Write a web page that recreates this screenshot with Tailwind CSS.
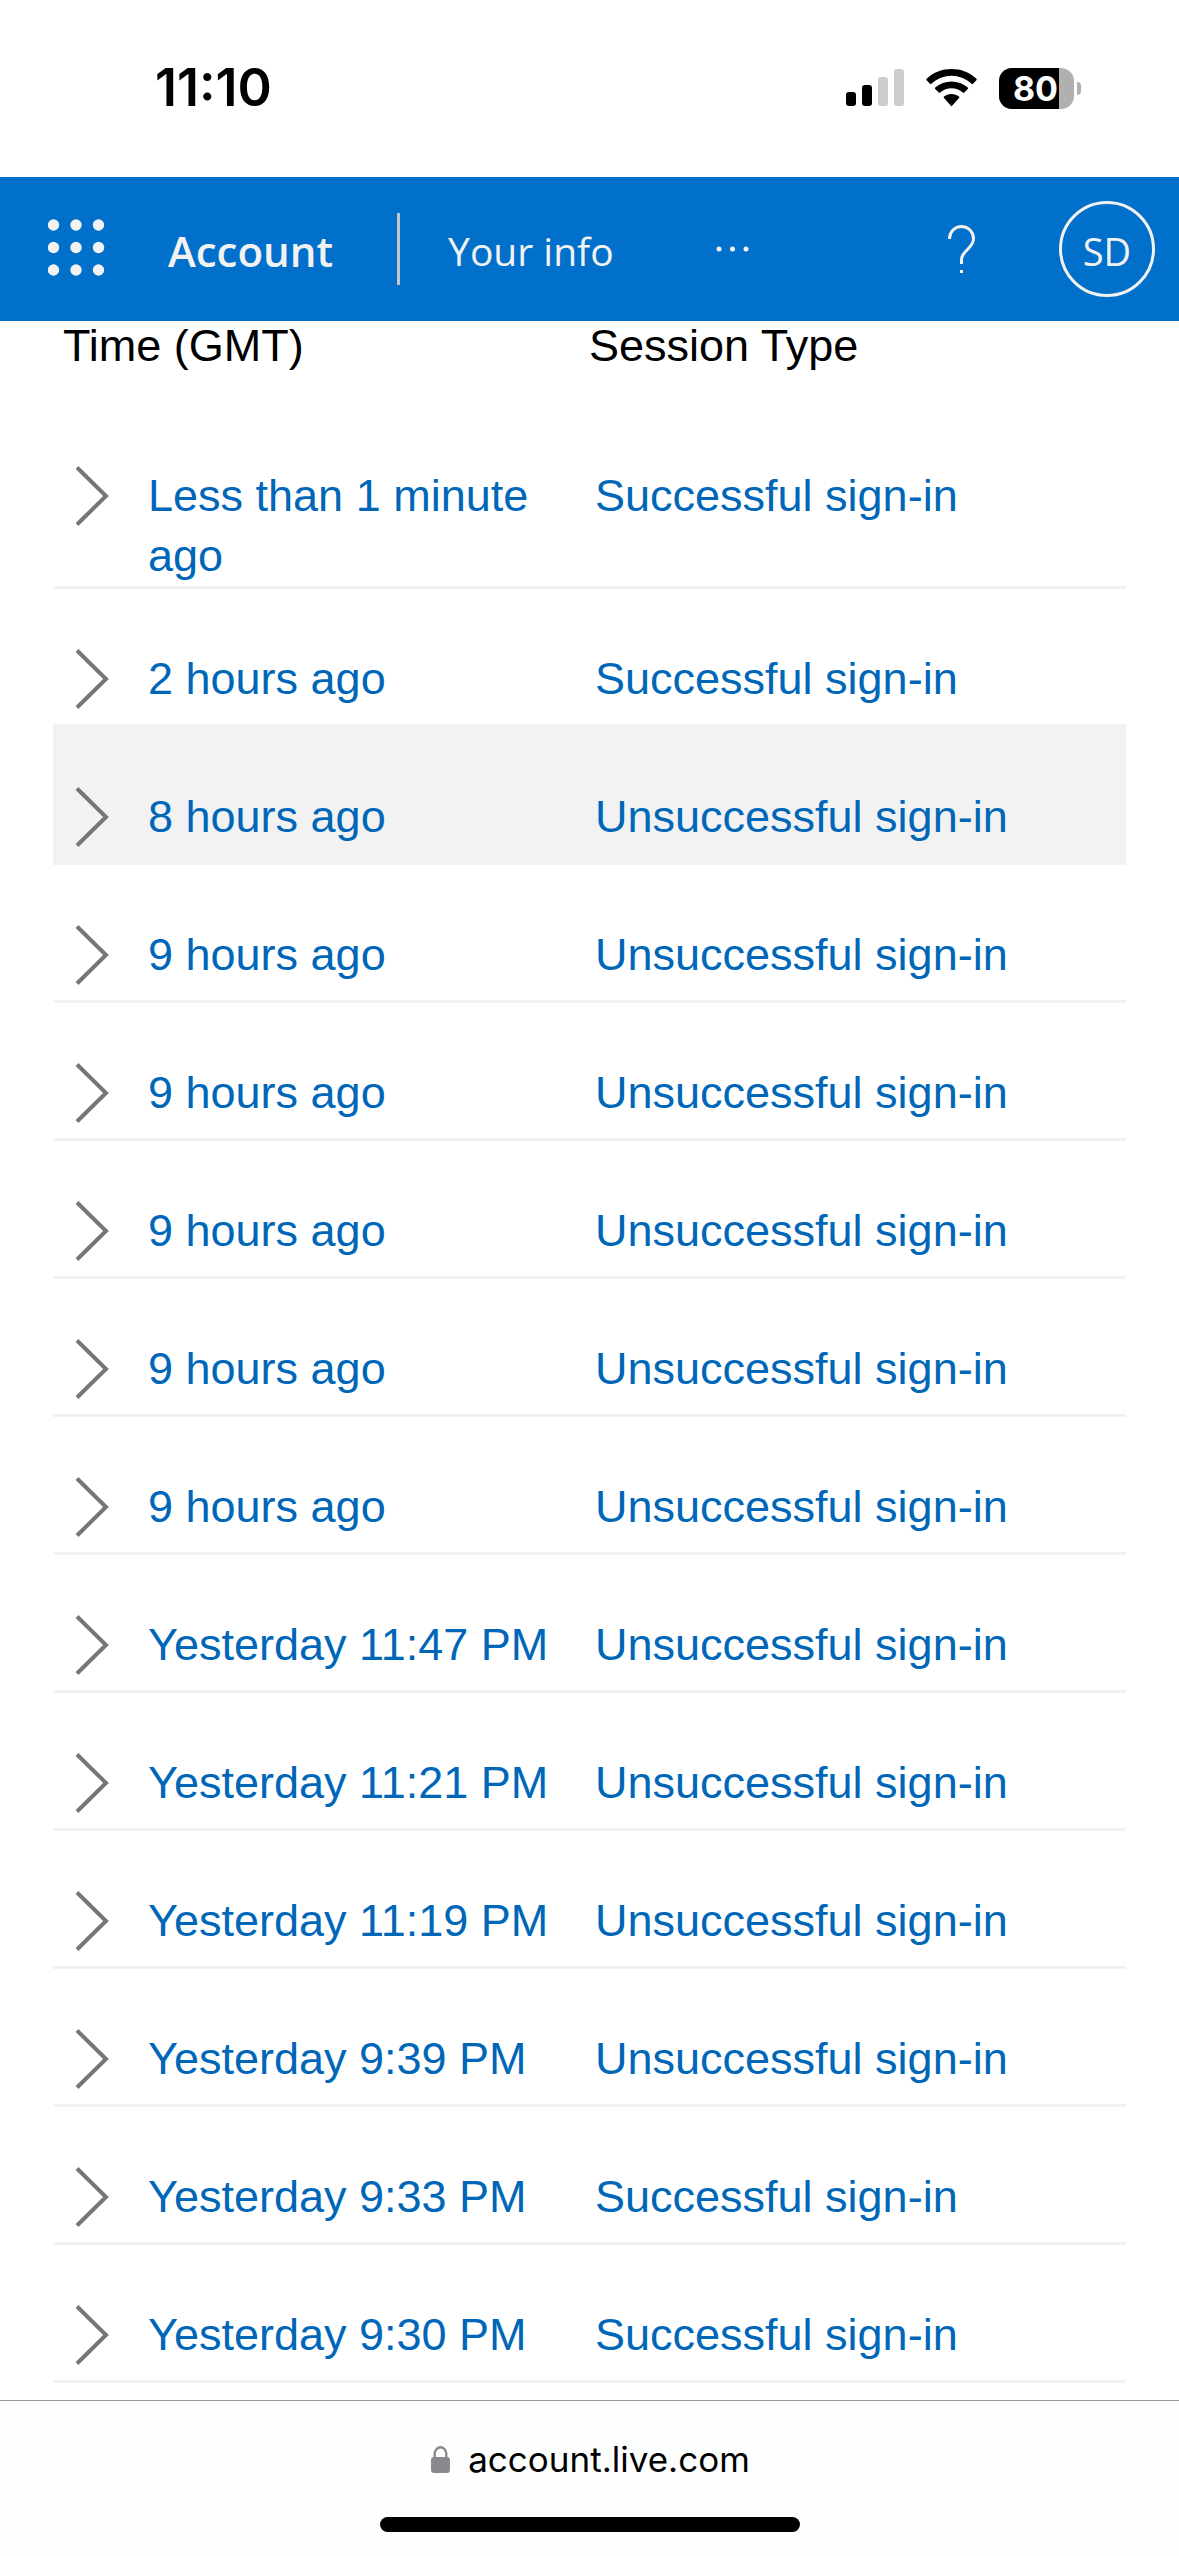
<!DOCTYPE html>
<html lang="en">
<head>
<meta charset="utf-8">
<meta name="viewport" content="width=device-width, initial-scale=1">
<title>Recent activity</title>
<script src="https://cdn.jsdelivr.net/npm/@tailwindcss/browser@4"></script>
</head>
<body class="flex min-h-screen flex-col bg-white font-['Liberation_Sans',Arial,sans-serif] text-[45px] text-black">

<!-- Status bar -->
<div class="flex h-[177px] shrink-0 items-start justify-between pt-[58px] pr-[98px] pl-[155px] font-[Inter,sans-serif]">
  <time class="text-[52px] leading-[60px] font-semibold">11:10</time>
  <div class="flex h-[60px] items-center gap-[22px]">
    <svg class="h-[38px] w-[58px]" viewBox="0 0 58 38" aria-label="Signal">
      <rect x="0" y="23" width="10" height="14" rx="3"/>
      <rect x="16" y="16" width="10" height="21" rx="3"/>
      <rect x="32" y="8" width="10" height="29" rx="3" fill="#ccc"/>
      <rect x="48" y="0" width="10" height="37" rx="3" fill="#ccc"/>
    </svg>
    <svg class="h-[38px] w-[51px]" viewBox="0 0 51 38" aria-label="Wi-Fi">
      <path d="M0.6 11.2a1 1 0 0 1 0-1.4C14-3.2 37-3.2 50.4 9.800a1 1 0 0 1 0 1.400l-3.400 3.600a1 1 0 0 1-1.400 0C34 4 17 4 5.400 14.800a1 1 0 0 1-1.400 0z"/>
      <path d="M9.200 20a1 1 0 0 1 0-1.400C18 10.600 33 10.600 41.800 18.600a1 1 0 0 1 0 1.400l-3.500 3.600a1 1 0 0 1-1.400 0C30.500 17.900 20.500 17.900 14.100 23.600a1 1 0 0 1-1.400 0z"/>
      <path d="M18 29a1 1 0 0 1 0-1.500C22.300 24.100 28.700 24.100 33 27.500a1 1 0 0 1 0 1.500l-6.700 7.600a1 1 0 0 1-1.600 0z"/>
    </svg>
    <div class="flex items-center gap-[3px]">
      <div class="flex h-[41px] w-[75px] items-center overflow-hidden rounded-[13px] bg-[#b0b0b0]">
        <span class="flex h-full w-[60px] items-center justify-end bg-black pr-px text-[34px] leading-[41px] font-bold text-white">80</span>
      </div>
      <div class="h-[13px] w-[4px] rounded-r-full bg-[#b0b0b0]"></div>
    </div>
  </div>
</div>

<!-- Site header -->
<header class="flex h-36 shrink-0 items-center bg-[#0070cb] pr-6 pl-12 font-['Open_Sans','Noto_Sans',sans-serif] text-[#f2f2f2]">
  <button type="button" aria-label="App launcher" class="mb-1 shrink-0">
    <svg class="size-[57px]" viewBox="0 0 57 57" fill="#f2f2f2">
      <circle cx="5.500" cy="6" r="5.700"/><circle cx="28" cy="6" r="5.700"/><circle cx="50.500" cy="6" r="5.700"/>
      <circle cx="5.500" cy="28.500" r="5.700"/><circle cx="28" cy="28.500" r="5.700"/><circle cx="50.500" cy="28.500" r="5.700"/>
      <circle cx="5.500" cy="51" r="5.700"/><circle cx="28" cy="51" r="5.700"/><circle cx="50.500" cy="51" r="5.700"/>
    </svg>
  </button>
  <a href="#" class="ml-[63px] pt-1 text-[42px] leading-[60px] font-semibold">Account</a>
  <div class="ml-16 h-[72px] w-[3px] bg-[#c8c6c4]"></div>
  <a href="#" class="ml-12 pt-1 text-[39px] leading-[60px] whitespace-nowrap">Your info</a>
  <button type="button" aria-label="More" class="ml-[102px] shrink-0">
    <svg class="h-[6px] w-[33px]" viewBox="0 0 33 6" fill="#f2f2f2"><circle cx="3" cy="3" r="2.500"/><circle cx="16.500" cy="3" r="2.500"/><circle cx="30" cy="3" r="2.500"/></svg>
  </button>
  <button type="button" aria-label="Help" class="ml-auto shrink-0">
    <svg class="h-[48px] w-[28px]" viewBox="0 0 28 48" fill="none" stroke="#f2f2f2" stroke-width="3"><path d="M1.500 14V13.500a12 12 0 0 1 24 0c0 4.500-2 7-5.500 10.500-4 4-6.500 6.500-6.500 11V39"/><path d="M12 46.500h3"/></svg>
  </button>
  <button type="button" aria-label="Account manager" class="ml-[83px] flex size-24 shrink-0 items-center justify-center rounded-full border-3 border-[#f2f2f2] pt-1 text-[38px] leading-[60px]">SD</button>
</header>

<!-- Activity list -->
<main class="flex-1 px-[53px] pb-[17px]">
  <table class="w-full table-fixed border-separate border-spacing-0 text-left">
    <colgroup><col class="w-[95px]"><col class="w-[441px]"><col></colgroup>
    <thead>
      <tr class="leading-[50px]">
        <th colspan="2" scope="col" class="pb-[35px] pl-[10px] font-normal">Time (GMT)</th>
        <th scope="col" class="pb-[35px] font-normal">Session Type</th>
      </tr>
    </thead>
    <tbody id="activity" class="leading-[60px] text-[#0067b8]"></tbody>
  </table>
</main>

<!-- Browser address bar -->
<footer class="flex h-[156px] shrink-0 flex-col items-center justify-between border-t border-[#999] bg-[#fdfefe] pt-[34px] pb-6 font-[Inter,sans-serif]">
  <a href="#" class="flex items-center gap-[18px] pl-[2px] text-[35px] leading-[48px]">
    <svg class="h-[27px] w-[19px]" viewBox="0 0 19 27" aria-hidden="true"><rect y="11" width="19" height="16" rx="3" fill="#8a8a8e"/><path d="M3.700 12V8a5.800 6.700 0 0 1 11.600 0v4" fill="none" stroke="#8a8a8e" stroke-width="2.400"/></svg>
    account.live.com
  </a>
  <div class="h-[15px] w-[420px] rounded-full bg-black"></div>
</footer>

<script>
  const sessions = [
    ["Less than 1 minute ago", true],
    ["2 hours ago", true],
    ["8 hours ago", false],
    ["9 hours ago", false],
    ["9 hours ago", false],
    ["9 hours ago", false],
    ["9 hours ago", false],
    ["9 hours ago", false],
    ["Yesterday 11:47 PM", false],
    ["Yesterday 11:21 PM", false],
    ["Yesterday 11:19 PM", false],
    ["Yesterday 9:39 PM", false],
    ["Yesterday 9:33 PM", true],
    ["Yesterday 9:30 PM", true]
  ];
  const highlighted = 2;
  document.getElementById("activity").innerHTML = sessions.map(([time, ok], i) => `
    <tr class="${i === highlighted ? "bg-[#f2f2f2]" : ""}">
      <td class="h-[138px] border-b-3 border-[#f2f2f2] pt-[60px] pl-[22px] align-top">
        <button type="button" aria-label="Expand" class="block">
          <svg class="h-[60px] w-[34px]" viewBox="0 0 34 60" fill="none" stroke="#767676" stroke-width="4"><path d="M2 1.500 31 30 2 58.500"/></svg>
        </button>
      </td>
      <td class="border-b-3 border-[#f2f2f2] pt-[60px] align-top"><a href="#" class="block">${time}</a></td>
      <td class="border-b-3 border-[#f2f2f2] pt-[60px] pl-[6px] align-top"><a href="#" class="block">${ok ? "Successful" : "Unsuccessful"} sign-in</a></td>
    </tr>`).join("");
</script>
</body>
</html>
